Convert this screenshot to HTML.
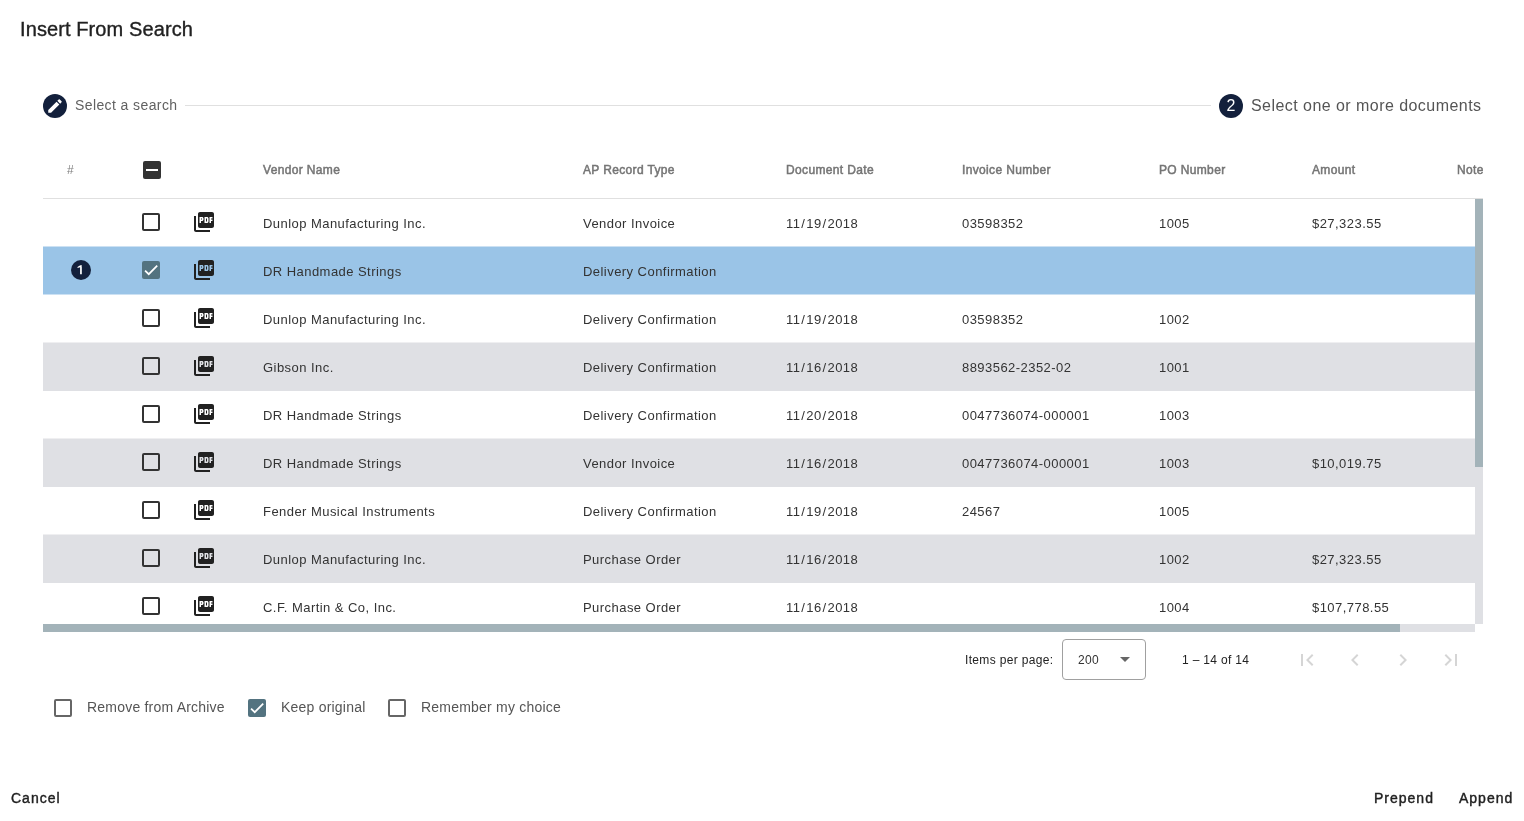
<!DOCTYPE html><html><head><meta charset="utf-8"><style>*{margin:0;padding:0;box-sizing:border-box}
html,body{width:1524px;height:821px;overflow:hidden;background:#fff;font-family:"Liberation Sans",sans-serif;position:relative}
#root{position:absolute;left:0;top:0;width:1524px;height:821px;will-change:transform}
#root>div,#root>svg{position:absolute}
.title{left:20px;top:17px;font-size:20px;line-height:24px;color:#212121;white-space:nowrap;letter-spacing:0.1px;-webkit-text-stroke:0.35px #212121}
.step1icon{left:43px;top:94px;width:24px;height:24px;border-radius:50%;background:#13203c}
.step1icon svg{position:absolute;left:3px;top:3px}
.step1label{left:75px;top:97px;font-size:14px;line-height:16px;color:#616161;white-space:nowrap;letter-spacing:0.4px}
.stepline{left:185px;top:105px;width:1026px;height:1px;background:#e0e0e0}
.step2icon{left:1219px;top:94px;width:24px;height:24px;border-radius:50%;background:#13203c;color:#fff;font-size:16px;line-height:24px;text-align:center}
.step2label{left:1251px;top:97px;font-size:16px;line-height:18px;color:#555;white-space:nowrap;letter-spacing:0.45px}
.hdr{left:43px;top:140px;width:1440px;height:58px;overflow:hidden}
.hdr>div{position:absolute}
.hc{top:23px;font-size:12px;line-height:14px;color:#757575;white-space:nowrap;letter-spacing:0.35px;-webkit-text-stroke:0.5px #757575}
.cbind{left:100px;top:21px;width:18px;height:18px;border-radius:2px;background:#333}
.cbind .bar{position:absolute;left:3px;top:8px;width:12px;height:2px;background:#fff}
.hline{left:43px;top:198px;width:1440px;height:1px;background:#e0e0e0}
.body{left:43px;top:199px;width:1440px;height:433px;overflow:hidden}
.row{position:absolute;left:0;width:1432px;height:48px;background:#fff}
.row.alt{background:#dfe0e4;box-shadow:0 -1px 0 rgba(223,224,228,0.5)}
.row.sel{background:#9ac4e7;height:47px;box-shadow:0 -1px 0 rgba(154,196,231,0.5),0 1px 0 rgba(154,196,231,0.5)}
.row>div,.row>svg{position:absolute}
.badge{left:28px;top:13px;width:20px;height:20px;border-radius:50%;background:#13203c;color:#fff;font-size:12px;line-height:20px;text-align:center}
.cb{left:99px;top:14px;width:18px;height:18px;border:2px solid #333;border-radius:2px}
.cb.checked{border:none;background:#537380}
.cb svg{position:absolute;left:0;top:0}
.pdf{left:149px;top:11px;fill:#212121}
.c{top:17px;font-size:13px;line-height:15px;color:#333;white-space:nowrap;letter-spacing:0.45px}
.vtrack{position:absolute;left:1432px;top:0;width:8px;height:425px;background:#dfe0e4}
.vthumb{position:absolute;left:0;top:0;width:8px;height:268px;background:#a3b3b9}
.htrack{position:absolute;left:0;top:425px;width:1432px;height:8px;background:#dfe0e4}
.hthumb{position:absolute;left:0;top:0;width:1357px;height:8px;background:#a3b3b9}
.ipp{left:965px;top:653px;font-size:12px;line-height:14px;color:#222;white-space:nowrap;letter-spacing:0.33px}
.sel200{left:1062px;top:639px;width:84px;height:41px;border:1px solid #a0a0a0;border-radius:4px}
.sel200 span{position:absolute;left:15px;top:13px;font-size:12px;line-height:14px;color:#333;letter-spacing:0.3px}
.arrow{position:absolute;left:57px;top:17px;width:0;height:0;border-left:5px solid transparent;border-right:5px solid transparent;border-top:5px solid #666}
.range{left:1182px;top:653px;font-size:12px;line-height:14px;color:#222;white-space:nowrap;letter-spacing:0.33px}
.nav{top:648px;fill:#d5d5d5}
.bcb{top:699px;width:18px;height:18px;border:2px solid #666;border-radius:2px}
.bcb.checked{border:none;background:#537380}
.bcb svg{position:absolute;left:0;top:0}
.blabel{top:699px;font-size:14px;line-height:16px;color:#555;white-space:nowrap;letter-spacing:0.21px}
.btn{top:790px;font-size:14px;line-height:16px;color:#212121;letter-spacing:1.0px;white-space:nowrap;-webkit-text-stroke:0.4px #212121}

.hc.hash{color:#808080;-webkit-text-stroke:0;letter-spacing:0}
.badge svg{position:absolute;left:0;top:0}
.sl{padding:0 0.9px}
</style></head><body>
<div id="root">
<div class="title">Insert From Search</div>
<div class="step1icon"><svg width="18" height="18" viewBox="0 0 24 24"><path fill="#fff" d="M3 17.25V21h3.75L17.81 9.94l-3.75-3.75L3 17.25zM20.71 7.04c.39-.39.39-1.02 0-1.41l-2.34-2.34c-.39-.39-1.02-.39-1.41 0l-1.83 1.83 3.75 3.75 1.83-1.83z"/></svg></div>
<div class="step1label">Select a search</div>
<div class="stepline"></div>
<div class="step2icon">2</div>
<div class="step2label">Select one or more documents</div>
<div class="hdr">
<div class="hc hash" style="left:24px">#</div>
<div class="cbind"><div class="bar"></div></div>
<div class="hc" style="left:220px">Vendor Name</div>
<div class="hc" style="left:540px">AP Record Type</div>
<div class="hc" style="left:743px">Document Date</div>
<div class="hc" style="left:919px">Invoice Number</div>
<div class="hc" style="left:1116px">PO Number</div>
<div class="hc" style="left:1269px">Amount</div>
<div class="hc" style="left:1414px">Note</div>
</div>
<div class="hline"></div>
<div class="body">
<div class="row" style="top:0px">
<div class="cb"></div>
<svg class="pdf" width="24" height="24" viewBox="0 0 24 24"><path d="M20 2H8c-1.1 0-2 .9-2 2v12c0 1.1.9 2 2 2h12c1.1 0 2-.9 2-2V4c0-1.1-.9-2-2-2zm-8.5 7.5c0 .83-.67 1.5-1.5 1.5H9v2H7.5V7H10c.83 0 1.5.67 1.5 1.5v1zm5 2c0 .83-.67 1.5-1.5 1.5h-2.5V7H15c.83 0 1.5.67 1.5 1.5v3zm4-3H19v1h1.5V11H19v2h-1.5V7h3v1.5zM9 9.5h1v-1H9v1zM4 6H2v14c0 1.1.9 2 2 2h14v-2H4V6zm10 5.5h1v-3h-1v3z"/></svg>
<div class="c" style="left:220px">Dunlop Manufacturing Inc.</div>
<div class="c" style="left:540px">Vendor Invoice</div>
<div class="c" style="left:743px">11<span class="sl">/</span>19<span class="sl">/</span>2018</div>
<div class="c" style="left:919px">03598352</div>
<div class="c" style="left:1116px">1005</div>
<div class="c" style="left:1269px">$27,323.55</div>
</div>
<div class="row sel" style="top:48px">
<div class="badge"><svg width="20" height="20" viewBox="0 0 20 20"><path fill="#fff" d="M9.1 5.3h1.7v8.9h-1.7z M6.5 6.9l2.7-1.6h1.6v1.5l-4.3 1.3z"/></svg></div>
<div class="cb checked"><svg width="18" height="18" viewBox="0 0 24 24"><path fill="none" stroke="#fff" stroke-width="2.3" d="M4.1 12.7 9 17.6 20.3 6.3"/></svg></div>
<svg class="pdf" width="24" height="24" viewBox="0 0 24 24"><path d="M20 2H8c-1.1 0-2 .9-2 2v12c0 1.1.9 2 2 2h12c1.1 0 2-.9 2-2V4c0-1.1-.9-2-2-2zm-8.5 7.5c0 .83-.67 1.5-1.5 1.5H9v2H7.5V7H10c.83 0 1.5.67 1.5 1.5v1zm5 2c0 .83-.67 1.5-1.5 1.5h-2.5V7H15c.83 0 1.5.67 1.5 1.5v3zm4-3H19v1h1.5V11H19v2h-1.5V7h3v1.5zM9 9.5h1v-1H9v1zM4 6H2v14c0 1.1.9 2 2 2h14v-2H4V6zm10 5.5h1v-3h-1v3z"/></svg>
<div class="c" style="left:220px">DR Handmade Strings</div>
<div class="c" style="left:540px">Delivery Confirmation</div>
</div>
<div class="row" style="top:96px">
<div class="cb"></div>
<svg class="pdf" width="24" height="24" viewBox="0 0 24 24"><path d="M20 2H8c-1.1 0-2 .9-2 2v12c0 1.1.9 2 2 2h12c1.1 0 2-.9 2-2V4c0-1.1-.9-2-2-2zm-8.5 7.5c0 .83-.67 1.5-1.5 1.5H9v2H7.5V7H10c.83 0 1.5.67 1.5 1.5v1zm5 2c0 .83-.67 1.5-1.5 1.5h-2.5V7H15c.83 0 1.5.67 1.5 1.5v3zm4-3H19v1h1.5V11H19v2h-1.5V7h3v1.5zM9 9.5h1v-1H9v1zM4 6H2v14c0 1.1.9 2 2 2h14v-2H4V6zm10 5.5h1v-3h-1v3z"/></svg>
<div class="c" style="left:220px">Dunlop Manufacturing Inc.</div>
<div class="c" style="left:540px">Delivery Confirmation</div>
<div class="c" style="left:743px">11<span class="sl">/</span>19<span class="sl">/</span>2018</div>
<div class="c" style="left:919px">03598352</div>
<div class="c" style="left:1116px">1002</div>
</div>
<div class="row alt" style="top:144px">
<div class="cb"></div>
<svg class="pdf" width="24" height="24" viewBox="0 0 24 24"><path d="M20 2H8c-1.1 0-2 .9-2 2v12c0 1.1.9 2 2 2h12c1.1 0 2-.9 2-2V4c0-1.1-.9-2-2-2zm-8.5 7.5c0 .83-.67 1.5-1.5 1.5H9v2H7.5V7H10c.83 0 1.5.67 1.5 1.5v1zm5 2c0 .83-.67 1.5-1.5 1.5h-2.5V7H15c.83 0 1.5.67 1.5 1.5v3zm4-3H19v1h1.5V11H19v2h-1.5V7h3v1.5zM9 9.5h1v-1H9v1zM4 6H2v14c0 1.1.9 2 2 2h14v-2H4V6zm10 5.5h1v-3h-1v3z"/></svg>
<div class="c" style="left:220px">Gibson Inc.</div>
<div class="c" style="left:540px">Delivery Confirmation</div>
<div class="c" style="left:743px">11<span class="sl">/</span>16<span class="sl">/</span>2018</div>
<div class="c" style="left:919px">8893562-2352-02</div>
<div class="c" style="left:1116px">1001</div>
</div>
<div class="row" style="top:192px">
<div class="cb"></div>
<svg class="pdf" width="24" height="24" viewBox="0 0 24 24"><path d="M20 2H8c-1.1 0-2 .9-2 2v12c0 1.1.9 2 2 2h12c1.1 0 2-.9 2-2V4c0-1.1-.9-2-2-2zm-8.5 7.5c0 .83-.67 1.5-1.5 1.5H9v2H7.5V7H10c.83 0 1.5.67 1.5 1.5v1zm5 2c0 .83-.67 1.5-1.5 1.5h-2.5V7H15c.83 0 1.5.67 1.5 1.5v3zm4-3H19v1h1.5V11H19v2h-1.5V7h3v1.5zM9 9.5h1v-1H9v1zM4 6H2v14c0 1.1.9 2 2 2h14v-2H4V6zm10 5.5h1v-3h-1v3z"/></svg>
<div class="c" style="left:220px">DR Handmade Strings</div>
<div class="c" style="left:540px">Delivery Confirmation</div>
<div class="c" style="left:743px">11<span class="sl">/</span>20<span class="sl">/</span>2018</div>
<div class="c" style="left:919px">0047736074-000001</div>
<div class="c" style="left:1116px">1003</div>
</div>
<div class="row alt" style="top:240px">
<div class="cb"></div>
<svg class="pdf" width="24" height="24" viewBox="0 0 24 24"><path d="M20 2H8c-1.1 0-2 .9-2 2v12c0 1.1.9 2 2 2h12c1.1 0 2-.9 2-2V4c0-1.1-.9-2-2-2zm-8.5 7.5c0 .83-.67 1.5-1.5 1.5H9v2H7.5V7H10c.83 0 1.5.67 1.5 1.5v1zm5 2c0 .83-.67 1.5-1.5 1.5h-2.5V7H15c.83 0 1.5.67 1.5 1.5v3zm4-3H19v1h1.5V11H19v2h-1.5V7h3v1.5zM9 9.5h1v-1H9v1zM4 6H2v14c0 1.1.9 2 2 2h14v-2H4V6zm10 5.5h1v-3h-1v3z"/></svg>
<div class="c" style="left:220px">DR Handmade Strings</div>
<div class="c" style="left:540px">Vendor Invoice</div>
<div class="c" style="left:743px">11<span class="sl">/</span>16<span class="sl">/</span>2018</div>
<div class="c" style="left:919px">0047736074-000001</div>
<div class="c" style="left:1116px">1003</div>
<div class="c" style="left:1269px">$10,019.75</div>
</div>
<div class="row" style="top:288px">
<div class="cb"></div>
<svg class="pdf" width="24" height="24" viewBox="0 0 24 24"><path d="M20 2H8c-1.1 0-2 .9-2 2v12c0 1.1.9 2 2 2h12c1.1 0 2-.9 2-2V4c0-1.1-.9-2-2-2zm-8.5 7.5c0 .83-.67 1.5-1.5 1.5H9v2H7.5V7H10c.83 0 1.5.67 1.5 1.5v1zm5 2c0 .83-.67 1.5-1.5 1.5h-2.5V7H15c.83 0 1.5.67 1.5 1.5v3zm4-3H19v1h1.5V11H19v2h-1.5V7h3v1.5zM9 9.5h1v-1H9v1zM4 6H2v14c0 1.1.9 2 2 2h14v-2H4V6zm10 5.5h1v-3h-1v3z"/></svg>
<div class="c" style="left:220px">Fender Musical Instruments</div>
<div class="c" style="left:540px">Delivery Confirmation</div>
<div class="c" style="left:743px">11<span class="sl">/</span>19<span class="sl">/</span>2018</div>
<div class="c" style="left:919px">24567</div>
<div class="c" style="left:1116px">1005</div>
</div>
<div class="row alt" style="top:336px">
<div class="cb"></div>
<svg class="pdf" width="24" height="24" viewBox="0 0 24 24"><path d="M20 2H8c-1.1 0-2 .9-2 2v12c0 1.1.9 2 2 2h12c1.1 0 2-.9 2-2V4c0-1.1-.9-2-2-2zm-8.5 7.5c0 .83-.67 1.5-1.5 1.5H9v2H7.5V7H10c.83 0 1.5.67 1.5 1.5v1zm5 2c0 .83-.67 1.5-1.5 1.5h-2.5V7H15c.83 0 1.5.67 1.5 1.5v3zm4-3H19v1h1.5V11H19v2h-1.5V7h3v1.5zM9 9.5h1v-1H9v1zM4 6H2v14c0 1.1.9 2 2 2h14v-2H4V6zm10 5.5h1v-3h-1v3z"/></svg>
<div class="c" style="left:220px">Dunlop Manufacturing Inc.</div>
<div class="c" style="left:540px">Purchase Order</div>
<div class="c" style="left:743px">11<span class="sl">/</span>16<span class="sl">/</span>2018</div>
<div class="c" style="left:1116px">1002</div>
<div class="c" style="left:1269px">$27,323.55</div>
</div>
<div class="row" style="top:384px">
<div class="cb"></div>
<svg class="pdf" width="24" height="24" viewBox="0 0 24 24"><path d="M20 2H8c-1.1 0-2 .9-2 2v12c0 1.1.9 2 2 2h12c1.1 0 2-.9 2-2V4c0-1.1-.9-2-2-2zm-8.5 7.5c0 .83-.67 1.5-1.5 1.5H9v2H7.5V7H10c.83 0 1.5.67 1.5 1.5v1zm5 2c0 .83-.67 1.5-1.5 1.5h-2.5V7H15c.83 0 1.5.67 1.5 1.5v3zm4-3H19v1h1.5V11H19v2h-1.5V7h3v1.5zM9 9.5h1v-1H9v1zM4 6H2v14c0 1.1.9 2 2 2h14v-2H4V6zm10 5.5h1v-3h-1v3z"/></svg>
<div class="c" style="left:220px">C.F. Martin &amp; Co, Inc.</div>
<div class="c" style="left:540px">Purchase Order</div>
<div class="c" style="left:743px">11<span class="sl">/</span>16<span class="sl">/</span>2018</div>
<div class="c" style="left:1116px">1004</div>
<div class="c" style="left:1269px">$107,778.55</div>
</div>
<div class="vtrack"><div class="vthumb"></div></div>
<div class="htrack"><div class="hthumb"></div></div>
</div>
<div class="ipp">Items per page:</div>
<div class="sel200"><span>200</span><div class="arrow"></div></div>
<div class="range">1 – 14 of 14</div>
<svg class="nav" style="left:1295px" width="24" height="24" viewBox="0 0 24 24"><path d="M18.41 16.59L13.82 12l4.59-4.59L17 6l-6 6 6 6zM6 6h2v12H6z"/></svg>
<svg class="nav" style="left:1343px" width="24" height="24" viewBox="0 0 24 24"><path d="M15.41 7.41L14 6l-6 6 6 6 1.41-1.41L10.83 12z"/></svg>
<svg class="nav" style="left:1391px" width="24" height="24" viewBox="0 0 24 24"><path d="M10 6L8.59 7.41 13.17 12l-4.58 4.59L10 18l6-6z"/></svg>
<svg class="nav" style="left:1439px" width="24" height="24" viewBox="0 0 24 24"><path d="M5.59 7.41L10.18 12l-4.59 4.59L7 18l6-6-6-6zM16 6h2v12h-2z"/></svg>
<div class="bcb" style="left:54px"></div><div class="blabel" style="left:87px">Remove from Archive</div>
<div class="bcb checked" style="left:248px"><svg width="18" height="18" viewBox="0 0 24 24"><path fill="none" stroke="#fff" stroke-width="2.3" d="M4.1 12.7 9 17.6 20.3 6.3"/></svg></div><div class="blabel" style="left:281px">Keep original</div>
<div class="bcb" style="left:388px"></div><div class="blabel" style="left:421px">Remember my choice</div>
<div class="btn" style="left:11px">Cancel</div>
<div class="btn" style="left:1374px">Prepend</div>
<div class="btn" style="left:1459px">Append</div>
</div>
</body></html>
